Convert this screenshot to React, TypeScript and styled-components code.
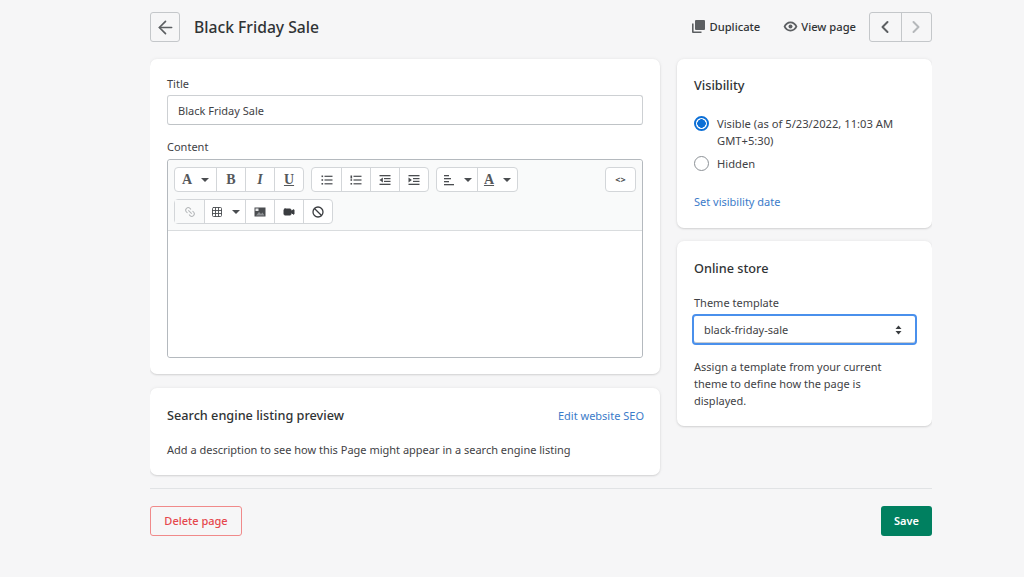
import React from 'react'
import styled, { createGlobalStyle } from 'styled-components'
import { ArrowLeft, ChevronLeft, ChevronRight, Link2, Ban, Video, Grid3x3 } from 'lucide-react'

const GlobalStyle = createGlobalStyle`
  html, body {
    margin: 0;
    background: #f6f6f7;
    color: #202223;
    font-family: "Noto Sans", "Open Sans", sans-serif;
    font-size: 11px;
  }
  * { box-sizing: border-box; }
`

const Caret = () => <CaretMark />

const ListIcon = ({ ordered }: { ordered?: boolean }) => (
  <svg width="12" height="12" viewBox="0 0 12 12" fill="#4a4d50">
    <rect x="0.5" y="1.5" width="1.6" height={ordered ? 3 : 1.6} />
    <rect x="0.5" y="5.2" width="1.6" height="1.6" />
    <rect x="0.5" y="9" width="1.6" height="1.6" />
    <rect x="3.5" y="1.7" width="8" height="1.2" />
    <rect x="3.5" y="5.4" width="8" height="1.2" />
    <rect x="3.5" y="9.2" width="8" height="1.2" />
  </svg>
)

const IndentIcon = ({ flip }: { flip?: boolean }) => (
  <svg width="12" height="12" viewBox="0 0 12 12" fill="#4a4d50">
    <rect x="0.5" y="1" width="11" height="1.3" />
    <rect x="5" y="4" width="6.5" height="1.2" />
    <rect x="5" y="6.8" width="6.5" height="1.2" />
    <rect x="0.5" y="9.7" width="11" height="1.3" />
    <polygon points={flip ? '0.5,3.6 3.9,6 0.5,8.4' : '3.9,3.6 0.5,6 3.9,8.4'} />
  </svg>
)

const AlignIcon = () => (
  <svg width="12" height="12" viewBox="0 0 12 12" fill="#4a4d50">
    <rect x="1" y="1" width="5" height="1.3" />
    <rect x="1" y="4" width="7" height="1.3" />
    <rect x="1" y="7" width="5" height="1.3" />
    <rect x="1" y="10" width="10" height="1.3" />
  </svg>
)

const PictureIcon = () => (
  <svg width="12" height="12" viewBox="0 0 12 12">
    <rect x="0.5" y="1.500" width="11" height="9" fill="#4a4d50" />
    <rect x="1.500" y="2.500" width="3" height="2.500" fill="#e6e7e8" />
    <polygon points="2,9.500 5,6 7,8 8.500,6.500 10.500,9.500" fill="#8d9093" />
  </svg>
)

const DuplicateIcon = () => (
  <svg width="15" height="15" viewBox="0 0 15 15" fill="#5c5f62">
    <rect x="4" y="1" width="10" height="10" rx="1" />
    <path d="M1 4.5h1.6V12.4H10.5V14H2a1 1 0 0 1-1-1z" />
  </svg>
)

const EyeIcon = () => (
  <svg width="15" height="15" viewBox="0 0 15 15" fill="#5c5f62">
    <path
      fillRule="evenodd"
      d="M7.5 2.6C4.3 2.6 1.7 4.7.6 7.5c1.1 2.8 3.7 4.9 6.9 4.9s5.800-2.100 6.900-4.900C13.300 4.700 10.700 2.600 7.500 2.600zM7.500 4.200c2.100 0 3.900 1.300 4.900 3.300-1 2-2.800 3.300-4.900 3.300S3.600 9.500 2.600 7.500c1-2 2.800-3.300 4.900-3.300z"
    />
    <circle cx="7.500" cy="7.500" r="2" />
  </svg>
)

const SelectArrows = () => (
  <svg width="7" height="10" viewBox="0 0 7 10" fill="#3a3d40">
    <polygon points="3.500,0.500 6.500,4 0.500,4" />
    <polygon points="0.500,6 6.500,6 3.500,9.500" />
  </svg>
)

export default function App() {
  return (
    <>
      <GlobalStyle />
      <Page>
        <Header>
          <BackButton aria-label="Back"><ArrowLeft size={21} strokeWidth={1.9} /></BackButton>
          <PageTitle>Black Friday Sale</PageTitle>
          <HeaderActions>
            <HeaderAction><DuplicateIcon />Duplicate</HeaderAction>
            <HeaderAction><EyeIcon />View page</HeaderAction>
            <Pager>
              <PagerButton aria-label="Previous"><ChevronLeft size={20} strokeWidth={2.4} /></PagerButton>
              <PagerButton aria-label="Next" $disabled><ChevronRight size={20} strokeWidth={2.4} /></PagerButton>
            </Pager>
          </HeaderActions>
        </Header>

        <Columns>
          <Column>
            <EditorCard>
              <FieldLabel>Title</FieldLabel>
              <TitleInput>Black Friday Sale</TitleInput>
              <ContentLabel>Content</ContentLabel>
              <Editor>
                <Toolbar>
                  <ToolRow>
                    <ToolGroup>
                      <ToolButton $w={41}><SerifGlyph>A</SerifGlyph><Caret /></ToolButton>
                      <ToolButton><SerifGlyph $bold>B</SerifGlyph></ToolButton>
                      <ToolButton><SerifGlyph $italic>I</SerifGlyph></ToolButton>
                      <ToolButton><SerifGlyph $under>U</SerifGlyph></ToolButton>
                    </ToolGroup>
                    <ToolGroup>
                      <ToolButton><ListIcon /></ToolButton>
                      <ToolButton><ListIcon ordered /></ToolButton>
                      <ToolButton><IndentIcon /></ToolButton>
                      <ToolButton><IndentIcon flip /></ToolButton>
                    </ToolGroup>
                    <ToolGroup>
                      <ToolButton $w={40}><AlignIcon /><Caret /></ToolButton>
                      <ToolButton $w={40}><SerifGlyph $under>A</SerifGlyph><Caret /></ToolButton>
                    </ToolGroup>
                    <CodeButton>&lt;&gt;</CodeButton>
                  </ToolRow>
                  <ToolRow>
                    <ToolGroup>
                      <ToolButton $disabled><Link2 size={12} strokeWidth={2} color="#b5b8ba" style={{ transform: 'rotate(45deg)' }} /></ToolButton>
                      <ToolButton $w={41}><Grid3x3 size={12} strokeWidth={1.8} color="#4a4d50" /><Caret /></ToolButton>
                      <ToolButton><PictureIcon /></ToolButton>
                      <ToolButton><Video size={12} fill="#3a3d40" color="#3a3d40" /></ToolButton>
                      <ToolButton><Ban size={12} strokeWidth={2.6} color="#3a3d40" /></ToolButton>
                    </ToolGroup>
                  </ToolRow>
                </Toolbar>
                <EditorBody />
              </Editor>
            </EditorCard>

            <SeoCard>
              <SeoHead>
                <CardHeading>Search engine listing preview</CardHeading>
                <SeoLink>Edit website SEO</SeoLink>
              </SeoHead>
              <SeoText>Add a description to see how this Page might appear in a search engine listing</SeoText>
            </SeoCard>
          </Column>

          <SideColumn>
            <VisibilityCard>
              <CardHeading>Visibility</CardHeading>
              <RadioList>
                <RadioRow><Radio $on /><RadioText>Visible (as of 5/23/2022, 11:03 AM GMT+5:30)</RadioText></RadioRow>
                <RadioRow><Radio /><RadioText>Hidden</RadioText></RadioRow>
              </RadioList>
              <VisibilityLink>Set visibility date</VisibilityLink>
            </VisibilityCard>

            <StoreCard>
              <CardHeading>Online store</CardHeading>
              <ThemeLabel>Theme template</ThemeLabel>
              <SelectBox>black-friday-sale<SelectArrows /></SelectBox>
              <HelpText>Assign a template from your current theme to define how the page is displayed.</HelpText>
            </StoreCard>
          </SideColumn>
        </Columns>

        <Footer>
          <DeleteButton>Delete page</DeleteButton>
          <SaveButton>Save</SaveButton>
        </Footer>
      </Page>
    </>
  )
}

const Page = styled.div`
  width: 782px;
  margin-left: 150px;
  padding-top: 12px;
  height: 577px;
  overflow: hidden;
`
const Header = styled.header`
  display: flex;
  align-items: center;
  height: 30px;
`
const BackButton = styled.button`
  width: 30px;
  height: 30px;
  padding: 0;
  display: flex;
  align-items: center;
  justify-content: center;
  background: #f6f6f7;
  border: 1px solid #c4c7ca;
  border-radius: 3px;
  color: #5c5f62;
`
const PageTitle = styled.h1`
  margin: 0 0 0 14px;
  font-size: 15.7px;
  font-weight: 500;
  color: #303335;
`
const HeaderActions = styled.div`
  margin-left: auto;
  display: flex;
  align-items: center;
  gap: 23px;
`
const HeaderAction = styled.span`
  display: flex;
  align-items: center;
  gap: 3px;
  padding-bottom: 2px;
  font-size: 11.2px;
  font-weight: 500;
  color: #303335;
`
const Pager = styled.div`
  display: flex;
  height: 30px;
  margin-left: -10px;
  border: 1px solid #c4c7ca;
  border-radius: 3px;
`
const PagerButton = styled.span<{ $disabled?: boolean }>`
  width: 30.5px;
  display: flex;
  align-items: center;
  justify-content: center;
  color: ${p => (p.$disabled ? '#b5b8bb' : '#5c5f62')};
  & + & { border-left: 1px solid #c4c7ca; }
`
const Columns = styled.div`
  display: flex;
  gap: 17px;
  margin-top: 17px;
`
const Column = styled.div`
  width: 510px;
  display: flex;
  flex-direction: column;
  gap: 14px;
`
const SideColumn = styled(Column)`
  width: 255px;
  gap: 13px;
`
const Card = styled.section`
  background: #fff;
  border-radius: 7px;
  box-shadow: 0 0 4px rgba(23, 24, 24, 0.06), 0 1px 2px rgba(0, 0, 0, 0.12);
  padding: 17px;
`
const EditorCard = styled(Card)`
  height: 315px;
`
const FieldLabel = styled.div`
  font-size: 11px;
  line-height: 15px;
  color: #3f4245;
  margin-bottom: 4px;
`
const ContentLabel = styled(FieldLabel)`
  margin-top: 14px;
  margin-bottom: 5px;
`
const TitleInput = styled.div`
  height: 30px;
  border: 1px solid #cdd0d3;
  border-bottom-color: #bfc3c6;
  border-radius: 3px;
  padding-left: 10px;
  display: flex;
  align-items: center;
  font-size: 11px;
  color: #3f4245;
`
const Editor = styled.div`
  height: 199px;
  border: 1px solid #b4b9be;
  border-radius: 3px;
  display: flex;
  flex-direction: column;
`
const Toolbar = styled.div`
  height: 71px;
  padding: 7px 6px 0;
  background: #f9fafa;
  border-bottom: 1px solid #d9dcde;
  border-radius: 3px 3px 0 0;
  display: flex;
  flex-direction: column;
  gap: 7px;
`
const ToolRow = styled.div`
  display: flex;
  gap: 7px;
`
const ToolGroup = styled.div`
  display: flex;
  height: 25px;
  background: #fff;
  border: 1px solid #d3d6d9;
  border-radius: 4px;
`
const ToolButton = styled.span<{ $w?: number; $disabled?: boolean }>`
  width: ${p => p.$w ?? 29}px;
  display: flex;
  align-items: center;
  justify-content: center;
  gap: 9px;
  background: ${p => (p.$disabled ? '#f9fafa' : 'transparent')};
  & + & { border-left: 1px solid #d3d6d9; }
`
const SerifGlyph = styled.span<{ $bold?: boolean; $italic?: boolean; $under?: boolean }>`
  font-family: "Liberation Serif", serif;
  font-size: 14px;
  line-height: 14px;
  color: #55585b;
  font-weight: ${p => (p.$bold || p.$under ? 700 : 600)};
  font-style: ${p => (p.$italic ? 'italic' : 'normal')};
  text-decoration: ${p => (p.$under ? 'underline' : 'none')};
`
const CaretMark = styled.span`
  width: 0;
  height: 0;
  border-left: 4px solid transparent;
  border-right: 4px solid transparent;
  border-top: 4px solid #4a4d50;
`
const CodeButton = styled.span`
  margin-left: auto;
  width: 31px;
  height: 25px;
  display: flex;
  align-items: center;
  justify-content: center;
  background: #fff;
  border: 1px solid #d3d6d9;
  border-radius: 4px;
  font-size: 9px;
  font-weight: 700;
  color: #4a4d50;
`
const EditorBody = styled.div`
  flex: 1;
  background: #fff;
  border-radius: 0 0 3px 3px;
`
const SeoCard = styled(Card)`
  height: 87px;
  padding-top: 18px;
`
const SeoHead = styled.div`
  display: flex;
  justify-content: space-between;
  align-items: center;
  height: 18px;
`
const CardHeading = styled.h2`
  margin: 0;
  font-size: 12.7px;
  line-height: 18px;
  font-weight: 500;
  color: #303335;
`
const TextLink = styled.a`
  font-size: 11px;
  color: #3b7bc9;
`
const SeoLink = styled(TextLink)`
  margin-right: -1px;
`
const SeoText = styled.p`
  margin: 18px 0 0;
  font-size: 11px;
  line-height: 16px;
  color: #3f4245;
`
const VisibilityCard = styled(Card)`
  height: 169px;
`
const RadioList = styled.div`
  margin-top: 21px;
  display: flex;
  flex-direction: column;
  gap: 6px;
`
const RadioRow = styled.div`
  display: flex;
  align-items: flex-start;
  gap: 8px;
`
const Radio = styled.span<{ $on?: boolean }>`
  flex: none;
  width: 15px;
  height: 15px;
  border-radius: 50%;
  margin-top: 1px;
  border: ${p => (p.$on ? '2px solid #0c6fd6' : '1.5px solid #8c9196')};
  background: ${p => (p.$on ? 'radial-gradient(circle, #0c6fd6 0 4px, #fff 4.5px)' : '#fff')};
`
const RadioText = styled.span`
  font-size: 11.2px;
  line-height: 17px;
  color: #3f4245;
`
const VisibilityLink = styled(TextLink)`
  display: block;
  margin-top: 22px;
  line-height: 16px;
`
const StoreCard = styled(Card)`
  height: 185px;
  padding-top: 18px;
`
const ThemeLabel = styled(FieldLabel)`
  margin-top: 18px;
  margin-bottom: 4px;
`
const SelectBox = styled.div`
  height: 31px;
  margin: 0 -2px;
  padding: 0 13px 0 10px;
  display: flex;
  align-items: center;
  justify-content: space-between;
  border: 2px solid #4a90ec;
  border-radius: 4px;
  box-shadow: inset 0 -1px 0 #c9ccd0;
  font-size: 11px;
  color: #3f4245;
`
const HelpText = styled.p`
  margin: 13px 0 0;
  font-size: 11px;
  line-height: 17px;
  color: #3f4245;
`
const Footer = styled.footer`
  margin-top: 13px;
  padding-top: 17px;
  border-top: 1px solid #e1e3e5;
  display: flex;
  justify-content: space-between;
`
const DeleteButton = styled.button`
  width: 92px;
  height: 30px;
  padding: 0 0 2px;
  font: 500 11px "Noto Sans", sans-serif;
  color: #e5484d;
  background: transparent;
  border: 1px solid #f08a8a;
  border-radius: 3px;
`
const SaveButton = styled.button`
  width: 51px;
  height: 30px;
  padding: 0 0 2px;
  font: 600 11px "Noto Sans", sans-serif;
  color: #fff;
  background: #008060;
  border: none;
  border-radius: 3px;
`
